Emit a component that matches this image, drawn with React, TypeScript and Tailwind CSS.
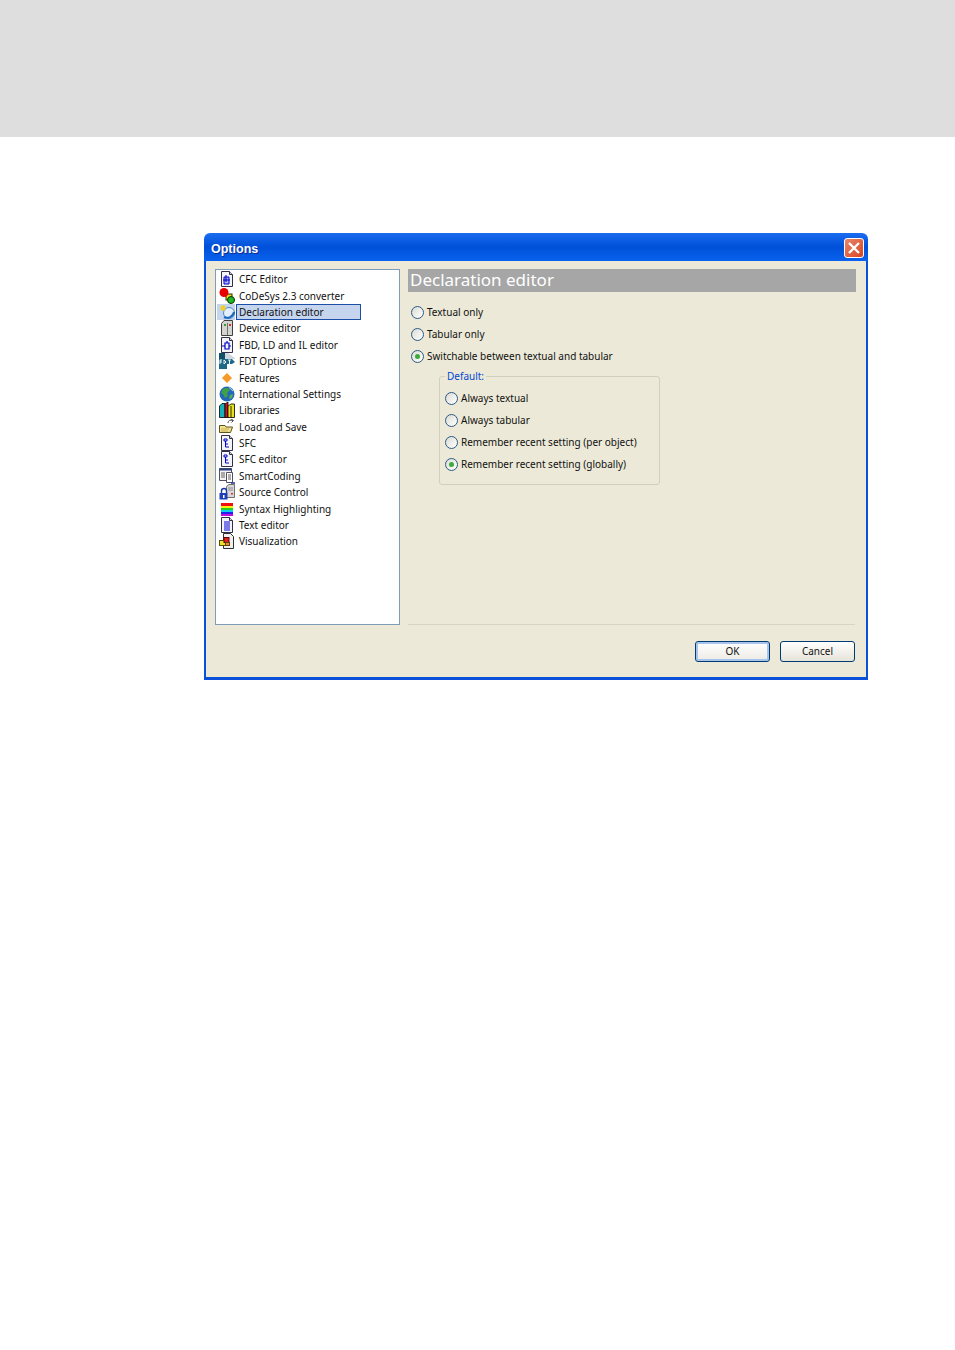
import React from 'react';

const uiFont = "font-['Noto_Sans','Liberation_Sans',sans-serif]";

// small page icon shared by the editor entries
const Page: React.FC<{ children?: React.ReactNode }> = ({ children }) => (
  <svg width="16" height="16" viewBox="0 0 16 16">
    <path d="M2.5 0.5H10.5L13.5 3.5V15.5H2.5Z" fill="#f4f4f8" stroke="#30304a" />
    <path d="M10.5 0.5V3.5H13.5" fill="#d0d0d8" stroke="#30304a" />
    {children}
  </svg>
);

const icons: Record<string, React.ReactNode> = {
  cfc: (
    <Page>
      <path d="M5 6H10V13H5Z M7 4V11 M4 9H11" fill="#a8b8f0" stroke="#0000c8" />
    </Page>
  ),
  codesys: (
    <svg width="16" height="16" viewBox="0 0 16 16">
      <rect x="7" y="6" width="6" height="6" fill="#e8d820" stroke="#303000" />
      <circle cx="12" cy="12" r="3.5" fill="#20b820" stroke="#083008" />
      <circle cx="5" cy="4.5" r="4.5" fill="#e80000" />
    </svg>
  ),
  declaration: (
    <svg width="16" height="16" viewBox="0 0 16 16">
      <circle cx="10" cy="9" r="5.5" fill="#e4eefa" stroke="#4a8ad0" />
      <path d="M5 13C9 15 14 13 15 8" fill="none" stroke="#1c68c0" strokeWidth="2" />
      <path d="M4 1V7M1 4H7M2 2L6 6M6 2L2 6" stroke="#f0d020" strokeWidth="1.2" />
    </svg>
  ),
  device: (
    <svg width="16" height="16" viewBox="0 0 16 16">
      <path d="M2.5 3.5L5 0.5H13.5V15.5H2.5Z" fill="#d4d4d0" stroke="#404040" />
      <path d="M8.5 3V15" stroke="#707070" />
      <rect x="5" y="4" width="2" height="2" fill="#30a030" />
      <rect x="10" y="4" width="2" height="2" fill="#d03030" />
    </svg>
  ),
  fbd: (
    <Page>
      <path d="M6 6H10V12H6Z M3 9H6 M10 9H12 M8 4V6" fill="none" stroke="#0000c8" strokeWidth="1.2" />
    </Page>
  ),
  fdt: (
    <svg width="16" height="16" viewBox="0 0 16 16">
      <path d="M0 0H9L16 5V6H0Z" fill="#cfd8e0" />
      <path d="M0 0H6V16H0Z" fill="#0f5068" />
      <path d="M0 6H13L16 9L13 11H8V16H0Z" fill="#1c6a88" />
      <path d="M1 7V11M1 7H3M1 9H3M5 7V11M5 7L7 9L5 11M9 7H12M10.5 7V11" fill="none" stroke="#fff" strokeWidth="0.9" />
    </svg>
  ),
  features: (
    <svg width="16" height="16" viewBox="0 0 16 16">
      <path d="M8 3L13 8L8 13L3 8Z" fill="#f79a2c" stroke="#f8c888" />
    </svg>
  ),
  international: (
    <svg width="16" height="16" viewBox="0 0 16 16">
      <circle cx="8" cy="8" r="7.5" fill="#2468b8" />
      <path d="M4 3C7 1 10 2 11 4L8 7L9 10L6 12L4 8L2 7Z" fill="#40a048" />
      <path d="M11 9L14 8L13 12L10 13Z" fill="#58b050" />
      <path d="M10 1.5L14 5" stroke="#b8d8f8" />
    </svg>
  ),
  libraries: (
    <svg width="16" height="16" viewBox="0 0 16 16">
      <path d="M0.5 4L3 1.5H6V15.5H0.5Z" fill="#18b0b8" stroke="#000" strokeWidth="0.8" />
      <path d="M6 2L9 0V15.5H6Z" fill="#d01818" stroke="#000" strokeWidth="0.8" />
      <path d="M9 4L12 2H15.5V15.5H9Z" fill="#e8e020" stroke="#000" strokeWidth="0.8" />
      <path d="M12 4V15.5" stroke="#000" strokeWidth="0.8" />
    </svg>
  ),
  load: (
    <svg width="16" height="16" viewBox="0 0 16 16">
      <path d="M0.5 6.5H6L7 8H13.5L11.5 13.5H0.5Z" fill="#f0e090" stroke="#5c5420" />
      <path d="M2 10H10M2 12H9" stroke="#c8b050" />
      <path d="M9 4C9 1.5 11 0.5 14 1.5M12 0L14.5 1.5L12.5 3.5" fill="none" stroke="#505050" />
    </svg>
  ),
  sfc: (
    <Page>
      <path d="M5 4H8V6H5Z M6.5 6V12H10 M6.5 9H9" fill="none" stroke="#0000c8" />
    </Page>
  ),
  smart: (
    <svg width="16" height="16" viewBox="0 0 16 16">
      <path d="M0.5 0.5H12.5V12.5H0.5Z" fill="#f4f4f4" stroke="#505060" />
      <path d="M0.5 1.5H12.5" stroke="#2a3f80" strokeWidth="2" />
      <path d="M2 5H6M2 7H6M2 9H6" stroke="#606060" />
      <path d="M7.5 4.5H13.5V14.5H7.5Z" fill="#fff" stroke="#505060" />
      <path d="M9 7H12M9 9H12M9 11H12" stroke="#606060" />
      <path d="M12 15H16" stroke="#2030a0" strokeWidth="1.5" />
    </svg>
  ),
  source: (
    <svg width="16" height="16" viewBox="0 0 16 16">
      <path d="M7.5 2.5L10 0.5H15.5V13.5H7.5Z" fill="#d8d8d8" stroke="#707070" />
      <path d="M9 4H14M9 6H14" stroke="#909090" />
      <rect x="12" y="9" width="2" height="1.5" fill="#d03030" />
      <path d="M2.5 9V7A2.5 2.5 0 0 1 7.5 7V9" fill="none" stroke="#1a3ca0" strokeWidth="1.4" />
      <rect x="0.5" y="9" width="8" height="6.5" fill="#1e3fb8" />
      <rect x="4" y="11" width="1.5" height="3" fill="#fff" />
    </svg>
  ),
  syntax: (
    <svg width="16" height="16" viewBox="0 0 16 16">
      <rect x="2" y="2" width="12" height="3" fill="#f01010" />
      <rect x="2" y="5" width="12" height="2" fill="#f8f010" />
      <rect x="2" y="7" width="12" height="2" fill="#20d020" />
      <rect x="2" y="9" width="12" height="2" fill="#10d0e8" />
      <rect x="2" y="11" width="12" height="2" fill="#2020f0" />
      <rect x="2" y="13" width="12" height="2" fill="#c010e0" />
    </svg>
  ),
  text: (
    <Page>
      <path d="M5 5H11M5 7H11M5 9H11M5 11H11M5 13H11" stroke="#0000d8" />
    </Page>
  ),
  visualization: (
    <svg width="16" height="16" viewBox="0 0 16 16">
      <path d="M4.5 0.5H11.5L14.5 3.5V15.5H4.5Z" fill="#f0f0f0" stroke="#303030" />
      <rect x="0.5" y="7.5" width="6" height="5" fill="#f0e030" stroke="#505000" />
      <rect x="5" y="4.5" width="5" height="5" fill="#e02020" stroke="#600000" />
      <rect x="6.5" y="9.5" width="4" height="3" fill="#f09030" stroke="#604000" />
    </svg>
  ),
};

const treeItems = [
  { key: 'cfc', label: 'CFC Editor' },
  { key: 'codesys', label: 'CoDeSys 2.3 converter' },
  { key: 'declaration', label: 'Declaration editor', selected: true },
  { key: 'device', label: 'Device editor' },
  { key: 'fbd', label: 'FBD, LD and IL editor' },
  { key: 'fdt', label: 'FDT Options' },
  { key: 'features', label: 'Features' },
  { key: 'international', label: 'International Settings' },
  { key: 'libraries', label: 'Libraries' },
  { key: 'load', label: 'Load and Save' },
  { key: 'sfc', label: 'SFC' },
  { key: 'sfc', label: 'SFC editor' },
  { key: 'smart', label: 'SmartCoding' },
  { key: 'source', label: 'Source Control' },
  { key: 'syntax', label: 'Syntax Highlighting' },
  { key: 'text', label: 'Text editor' },
  { key: 'visualization', label: 'Visualization' },
];

const Radio: React.FC<{ label: string; checked?: boolean }> = ({ label, checked }) => (
  <div className="flex h-[22px] items-center gap-[3px]">
    <span className="flex size-[13px] shrink-0 items-center justify-center rounded-full border border-[#2c5a85] bg-gradient-to-br from-[#dcdcd4] to-white">
      {checked && <span className="size-[5px] rounded-full bg-[#3cab3c]" />}
    </span>
    <span className="text-[10px] leading-none whitespace-nowrap text-[#111]">{label}</span>
  </div>
);

export default function App() {
  return (
    <div className={`min-h-screen bg-white ${uiFont}`}>
      <div className="h-[137px] bg-[#dedede]" />

      {/* Options dialog */}
      <div className="mt-[96px] ml-[204px] w-[664px] overflow-hidden rounded-t-[6px]">
        <div className="flex h-[28px] items-center justify-between bg-gradient-to-b from-[#1a6cf0] via-[#0050d8] to-[#0a62ee] pr-[4px] pl-[7px]">
          <span className="pt-[5px] font-['Liberation_Sans',sans-serif] text-[12.5px] font-bold text-white [text-shadow:1px_1px_0_#0f2a90]">
            Options
          </span>
          <span className="mt-[1px] flex size-[20px] items-center justify-center rounded-[3px] border border-white bg-gradient-to-br from-[#e8866a] to-[#d9421c]">
            <svg width="14" height="14" viewBox="0 0 14 14">
              <path d="M2 2L12 12M12 2L2 12" stroke="#fff" strokeWidth="2.4" />
            </svg>
          </span>
        </div>

        <div className="flex h-[419px] flex-col border-x-[2px] border-b-[3px] border-[#0a50d8] bg-[#ece9d8] pt-[8px] pr-[10px] pl-[9px]">
          <div className="flex gap-[8px]">
            {/* Category tree */}
            <div className="h-[356px] w-[185px] shrink-0 border border-[#7f9db9] bg-white pt-[1px] pl-[3px]">
              {treeItems.map((item) => (
                <div key={item.label} className="flex h-[16.4px] items-center gap-[1px]">
                  <span
                    className={`size-[16px] shrink-0 ${
                      item.selected ? 'box-content -ml-[2px] bg-[#c5d5ee] pl-[2px]' : ''
                    }`}
                  >
                    {icons[item.key]}
                  </span>
                  <span
                    className={`flex h-[16px] items-center text-[10px] leading-none whitespace-nowrap text-[#111] ${
                      item.selected ? 'w-[125px] border border-[#1d4fa8] bg-[#c5d5ee] pl-[2px]' : 'pl-[3px]'
                    }`}
                  >
                    {item.label}
                  </span>
                </div>
              ))}
            </div>

            {/* Page content */}
            <div className="flex h-[356px] flex-1 flex-col">
              <div className="flex h-[23px] items-center bg-[#a6a6a6] pb-[2px] pl-[2px] text-[17px] leading-none text-white">
                Declaration editor
              </div>
              <div className="mt-[9px] pl-[3px]">
                <Radio label="Textual only" />
                <Radio label="Tabular only" />
                <Radio label="Switchable between textual and tabular" checked />
              </div>
              <fieldset className="mt-[4px] ml-[31px] h-[114px] w-[221px] rounded-[3px] border border-[#d0d0bf] pl-[5px]">
                <legend className="px-[2px] text-[10px] leading-none text-[#0046d5]">Default:</legend>
                <div className="mt-[6px]">
                  <Radio label="Always textual" />
                  <Radio label="Always tabular" />
                  <Radio label="Remember recent setting (per object)" />
                  <Radio label="Remember recent setting (globally)" checked />
                </div>
              </fieldset>
            </div>
          </div>

          <div className="-mt-[1px] mr-[1px] ml-[193px] h-px bg-[#d8d5c4]" />

          <div className="mt-[16px] mr-[1px] flex justify-end gap-[10px]">
            <button className="h-[21px] w-[75px] rounded-[3px] border border-[#003c74] bg-gradient-to-b from-white to-[#ecebe5] pb-[1px] text-[10px] leading-none text-[#111] shadow-[inset_0_0_0_2px_#a8c4ec]">
              OK
            </button>
            <button className="h-[21px] w-[75px] rounded-[3px] border border-[#003c74] bg-gradient-to-b from-white to-[#e6e3d8] pb-[1px] text-[10px] leading-none text-[#111]">
              Cancel
            </button>
          </div>
        </div>
      </div>
    </div>
  );
}
